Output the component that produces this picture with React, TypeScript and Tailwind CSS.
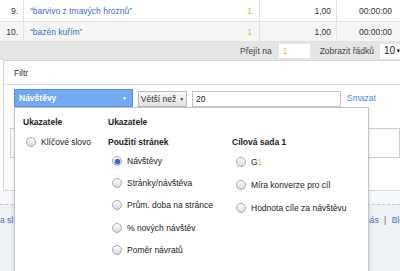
import { ReactNode } from "react";

function Radio(props: { checked?: boolean }) {
  return (
    <span className="flex h-[10px] w-[10px] shrink-0 items-center justify-center rounded-full border border-[#a9a9a9] bg-[linear-gradient(#ffffff,#d9d9d9)]">
      {props.checked ? (
        <span className="h-[5px] w-[5px] rounded-full bg-[#2f6fd0] shadow-[0_0_1px_#1c4fa0]" />
      ) : null}
    </span>
  );
}

function Option(props: { label: ReactNode; checked?: boolean; h: string }) {
  return (
    <div className={`flex items-center gap-[5px] pl-[4px] ${props.h}`}>
      <Radio checked={props.checked} />
      <span className="whitespace-nowrap">{props.label}</span>
    </div>
  );
}

function Row(props: { n: string; name: string; alt?: boolean; h: string }) {
  return (
    <div
      className={`flex border-b border-[#e2e2e2] ${props.h} ${
        props.alt ? "bg-[#f5f5f5]" : "bg-white"
      }`}
    >
      <div className="flex w-[24px] items-center justify-end border-r border-[#e2e2e2] pr-[5px] text-[#333]">
        {props.n}
      </div>
      <div className="flex w-[236px] items-center justify-between border-r border-[#e2e2e2] pl-[6px] pr-[7px]">
        <span className="text-[#3a6fc0]">{props.name}</span>
        <span className="text-[#e8b54a]">1</span>
      </div>
      <div className="flex w-[77px] items-center justify-end border-r border-[#e2e2e2] pr-[5px] text-[#333]">
        1,00
      </div>
      <div className="flex flex-1 items-center justify-end pr-[8px] text-[#333]">
        00:00:00
      </div>
    </div>
  );
}

export default function App() {
  return (
    <div className="relative h-[271px] w-[400px] overflow-hidden bg-white font-['Liberation_Sans',Arial,sans-serif] text-[8.5px] leading-[10px] text-[#222]">
      <Row n="9." name={"\u201cbarvivo z tmavých hroznů\u201d"} h="h-[22px]" />
      <Row n="10." name={"\u201cbazén kuřím\u201d"} alt h="h-[20px]" />

      {/* pager */}
      <div className="flex h-[18px] items-center whitespace-nowrap bg-[#e5e5e5] text-[#444]">
        <span className="ml-[240px] shrink-0">Přejít na</span>
        <div className="ml-[7px] flex h-[14px] w-[31px] shrink-0 items-center bg-white pl-[4px] text-[#e8b54a]">
          1
        </div>
        <span className="ml-[10px] shrink-0">Zobrazit řádků</span>
        <div className="ml-[6px] flex h-[15px] min-w-0 flex-1 items-center justify-between bg-white pl-[4px] pr-[2px] text-[10px] text-[#222]">
          <span>10</span>
          <span className="text-[6px]">▼</span>
        </div>
      </div>

      {/* filter section */}
      <div className="ml-[3px] h-[131px] border-b border-l border-t border-[#d6d6d6]">
        <div className="flex h-[24px] items-center border-b border-[#dedede] pl-[10px] text-[#333]">
          Filtr
        </div>
        <div className="mt-[4px] flex items-end whitespace-nowrap pl-[10px]">
          <div className="relative z-20 flex h-[18px] w-[119px] items-center justify-between border border-[#4d8ff5] bg-[#72aaf2] pl-[4px] pr-[5px] font-bold text-white">
            <span>Návštěvy</span>
            <span className="text-[5px]">▼</span>
          </div>
          <div className="ml-[5px] flex h-[16px] w-[49px] items-center justify-center gap-[3px] border border-[#bcbcbc] bg-[linear-gradient(#f8f8f8,#e2e2e2)] text-[#333]">
            <span>Větší než</span>
            <span className="text-[5px]">▼</span>
          </div>
          <div className="ml-[5px] flex h-[16px] w-[149px] items-center border border-[#c4c4c4] bg-white pl-[3px] text-[#222]">
            20
          </div>
          <span className="mb-[4px] ml-[6px] text-[#4a86d8]">Smazat</span>
        </div>
        <div className="ml-[6px] mt-[21px] h-[30px] border border-[#cfcfcf]" />
      </div>

      {/* page footer */}
      <div className="h-[13px] bg-[#f7f8fa]" />
      <div className="h-[80px] border-t border-dashed border-[#c8ccd2] bg-[#eef1f6] pt-[10px] text-[#3b78c8]">
        <div className="flex whitespace-nowrap">
          <span className="w-[356px] shrink-0">a služby</span>
          <span>
            O nás <span className="mx-[3px] text-[#666]">|</span> Blog
          </span>
        </div>
      </div>

      {/* metric dropdown */}
      <div className="absolute left-[14px] top-[107px] z-10 h-[200px] w-[355px] border border-[#c4c4c4] bg-white pl-[8px] pt-[9px] shadow-[0_2px_4px_rgba(0,0,0,0.15)]">
        <div className="flex">
          <div className="w-[85px]">
            <div className="font-bold">Ukazatele</div>
            <div className="mt-[10px] flex items-center gap-[5px] pl-[3px]">
              <Radio />
              <span className="whitespace-nowrap">Klíčové slovo</span>
            </div>
          </div>
          <div>
            <div className="font-bold">Ukazatele</div>
            <div className="mt-[10px] flex">
              <div className="w-[124px]">
                <div className="font-bold">Použití stránek</div>
                <div className="mt-[3px]">
                  <Option label="Návštěvy" checked h="h-[22px]" />
                  <Option label="Stránky/návštěva" h="h-[22px]" />
                  <Option label="Prům. doba na stránce" h="h-[22px]" />
                  <Option label="% nových návštěv" h="h-[23px]" />
                  <Option label="Poměr návratů" h="h-[22px]" />
                </div>
              </div>
              <div>
                <div className="font-bold">Cílová sada 1</div>
                <div className="mt-[3px]">
                  <Option
                    label={
                      <>
                        G<span className="text-[#e8b54a]">1</span>
                      </>
                    }
                    h="h-[23px]"
                  />
                  <Option label="Míra konverze pro cíl" h="h-[23px]" />
                  <Option label="Hodnota cíle za návštěvu" h="h-[23px]" />
                </div>
              </div>
            </div>
          </div>
        </div>
      </div>
    </div>
  );
}
